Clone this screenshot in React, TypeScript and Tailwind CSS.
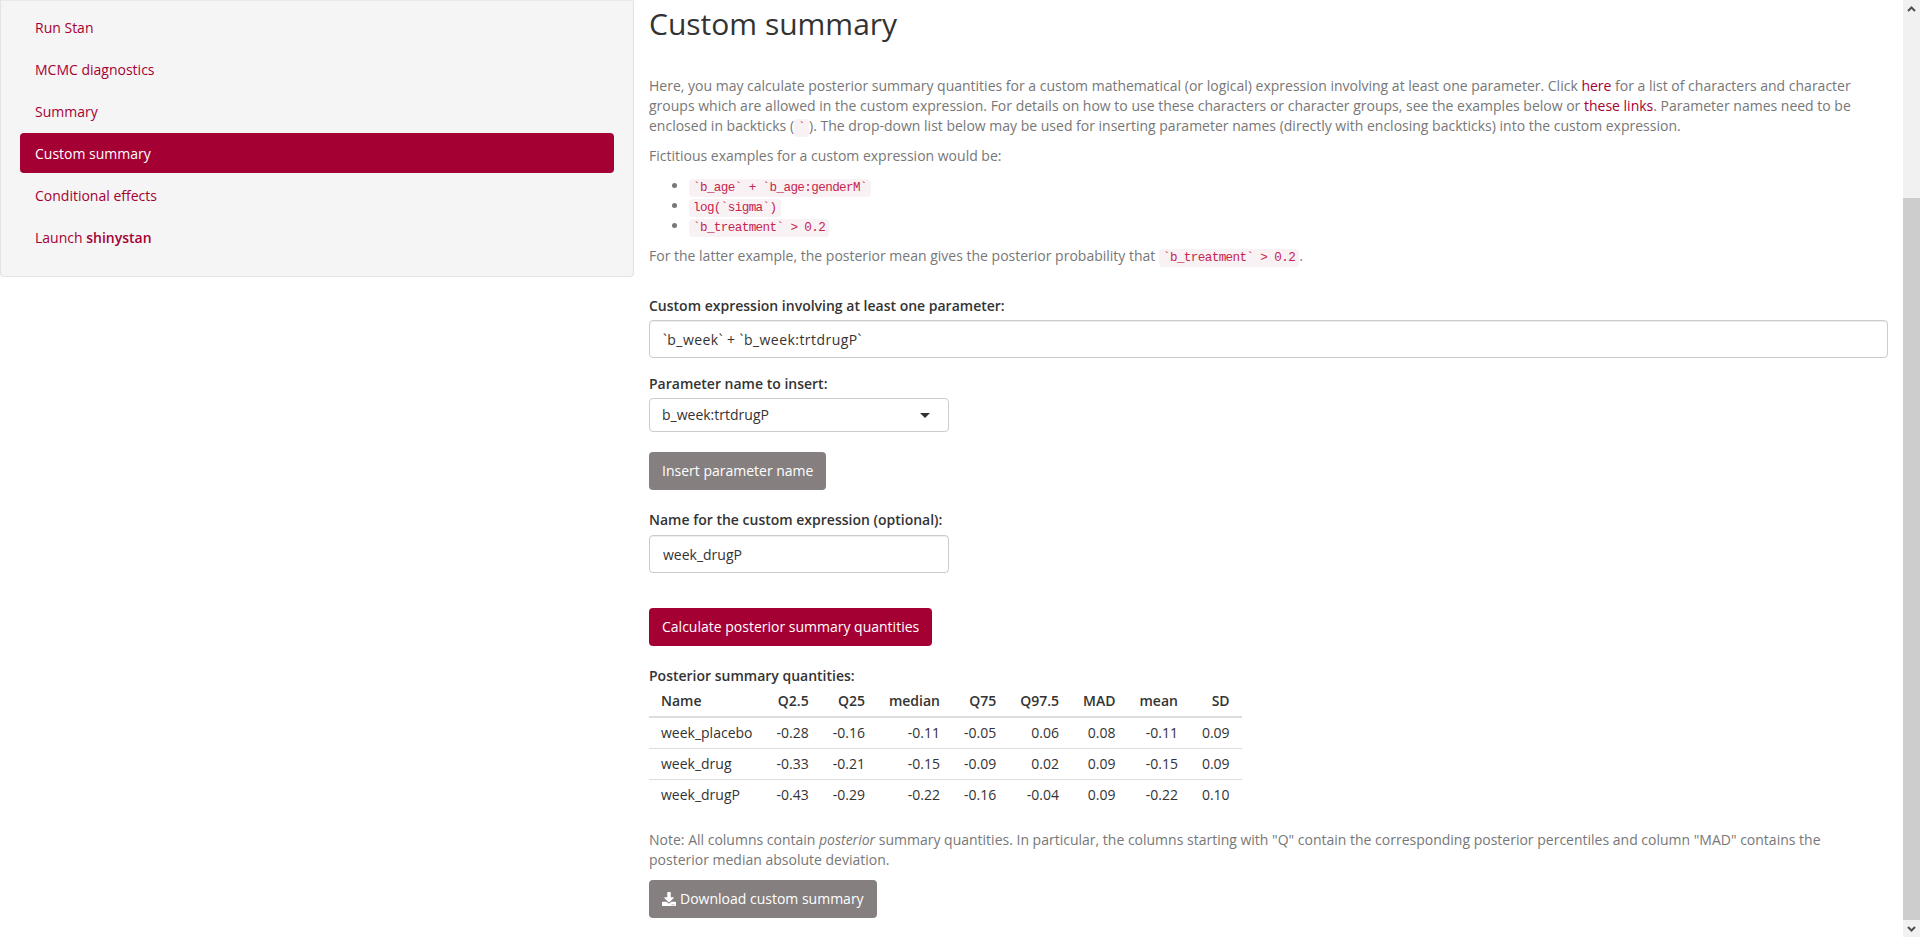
import { FaDownload } from 'react-icons/fa';

const navItems = ['Run Stan', 'MCMC diagnostics', 'Summary', 'Custom summary', 'Conditional effects'];

const columns = ['Q2.5', 'Q25', 'median', 'Q75', 'Q97.5', 'MAD', 'mean', 'SD'];

const rows = [
  ['week_placebo', '-0.28', '-0.16', '-0.11', '-0.05', '0.06', '0.08', '-0.11', '0.09'],
  ['week_drug', '-0.33', '-0.21', '-0.15', '-0.09', '0.02', '0.09', '-0.15', '0.09'],
  ['week_drugP', '-0.43', '-0.29', '-0.22', '-0.16', '-0.04', '0.09', '-0.22', '0.10'],
];

const Code = ({ children }: { children: string }) => (
  <code className="rounded-[4px] bg-[#f9f2f4] px-[4px] py-[2px] font-['Liberation_Mono',monospace] text-[12.6px] leading-none tracking-[-0.6px] text-[#c7254e]">
    {children}
  </code>
);

const NavLink = ({ label }: { label: string }) => (
  <li
    className={
      label === 'Custom summary'
        ? 'rounded-[4px] bg-[#a50034] px-[15px] pt-[11px] pb-[9px] text-white'
        : 'rounded-[4px] px-[15px] pt-[11px] pb-[9px] text-[#a50034]'
    }
  >
    {label}
  </li>
);

const ScrollBar = () => (
  <div className="flex h-full w-[17px] shrink-0 flex-col bg-[#f1f1f1]">
    <div className="flex h-[17px] items-center justify-center">
      <svg width="9" height="6" viewBox="0 0 9 6">
        <path d="M1 5l3.5-3.5L8 5" fill="none" stroke="#505050" strokeWidth="2" />
      </svg>
    </div>
    <div className="mt-[181px] h-[722px] bg-[#cdcdcd]" />
    <div className="flex flex-1 items-center justify-center">
      <svg width="9" height="6" viewBox="0 0 9 6">
        <path d="M1 1l3.5 3.5L8 1" fill="none" stroke="#505050" strokeWidth="2" />
      </svg>
    </div>
  </div>
);

export default function App() {
  return (
    <div className="flex h-[937px] w-full overflow-hidden bg-white font-['Open_Sans',sans-serif] text-[14px] leading-[20px] text-[#777]">
      <div className="flex min-w-0 flex-1">
        <aside className="w-[634px] shrink-0">
          <div className="rounded-b-[4px] border border-t-0 border-[#e3e3e3] bg-[#f5f5f5] px-[19px] pt-[7px] pb-[19px] shadow-[inset_0_1px_1px_rgba(0,0,0,0.05)]">
            <ul className="flex flex-col gap-[2px]">
              {navItems.map((item) => (
                <NavLink key={item} label={item} />
              ))}
              <li className="px-[15px] pt-[11px] pb-[9px] text-[#a50034]">
                Launch <strong className="font-semibold">shinystan</strong>
              </li>
            </ul>
          </div>
        </aside>

        <main className="min-w-0 flex-1 pr-[15px] pl-[15px]">
          <h2 className="mt-[7px] text-[30px] leading-[33px] font-normal text-[#333]">Custom summary</h2>

          <p className="mt-[36px]">
            Here, you may calculate posterior summary quantities for a custom mathematical (or logical) expression
            involving at least one parameter. Click <a className="text-[#a50034]">here</a> for a list of characters and
            character groups which are allowed in the custom expression. For details on how to use these characters or
            character groups, see the examples below or <a className="text-[#a50034]">these links</a>. Parameter names
            need to be enclosed in backticks (<Code>`</Code>). The drop-down list below may be used for inserting
            parameter names (directly with enclosing backticks) into the custom expression.
          </p>
          <p className="mt-[10px]">Fictitious examples for a custom expression would be:</p>
          <ul className="mt-[10px] list-disc pl-[40px]">
            <li>
              <Code>`b_age` + `b_age:genderM`</Code>
            </li>
            <li>
              <Code>log(`sigma`)</Code>
            </li>
            <li>
              <Code>`b_treatment` &gt; 0.2</Code>
            </li>
          </ul>
          <p className="mt-[10px]">
            For the latter example, the posterior mean gives the posterior probability that{' '}
            <Code>`b_treatment` &gt; 0.2</Code>.
          </p>

          <label className="mt-[30px] block font-semibold text-[#333]">
            Custom expression involving at least one parameter:
          </label>
          <input
            readOnly
            value="`b_week` + `b_week:trtdrugP`"
            className="mt-[4px] block h-[38px] w-full rounded-[4px] border border-[#ccc] bg-white px-[13px] tracking-[0.45px] text-[#333] shadow-[inset_0_1px_1px_rgba(0,0,0,0.075)] outline-none"
          />

          <label className="mt-[16px] block font-semibold text-[#333]">Parameter name to insert:</label>
          <div className="mt-[4px] flex h-[34px] w-[300px] items-center justify-between rounded-[4px] border border-[#ccc] bg-white pr-[18px] pl-[12px] text-[#333]">
            <span>b_week:trtdrugP</span>
            <span className="h-0 w-0 border-x-[5px] border-t-[5px] border-x-transparent border-t-[#333]" />
          </div>

          <button className="mt-[20px] block h-[38px] rounded-[4px] bg-[#857f80] px-[13px] text-white">
            Insert parameter name
          </button>

          <label className="mt-[20px] block font-semibold text-[#333]">Name for the custom expression (optional):</label>
          <input
            readOnly
            value="week_drugP"
            className="mt-[5px] block h-[38px] w-[300px] rounded-[4px] border border-[#ccc] bg-white px-[13px] text-[#333] shadow-[inset_0_1px_1px_rgba(0,0,0,0.075)] outline-none"
          />

          <button className="mt-[35px] block h-[38px] rounded-[4px] bg-[#a50034] px-[13px] text-white">
            Calculate posterior summary quantities
          </button>

          <div className="mt-[20px] font-semibold text-[#333]">Posterior summary quantities:</div>
          <table className="border-collapse text-[#333]">
            <thead>
              <tr className="border-b-2 border-[#ddd]">
                <th className="h-[31px] px-[12px] text-left font-semibold">Name</th>
                {columns.map((col) => (
                  <th key={col} className="px-[12px] text-right font-semibold">
                    {col}
                  </th>
                ))}
              </tr>
            </thead>
            <tbody>
              {rows.map((row, i) => (
                <tr key={row[0]} className={i < 2 ? 'border-b border-[#ddd]' : ''}>
                  {row.map((cell, j) => (
                    <td key={j} className={j === 0 ? 'h-[31px] px-[12px] text-left' : 'h-[31px] px-[12px] text-right'}>
                      {cell}
                    </td>
                  ))}
                </tr>
              ))}
            </tbody>
          </table>

          <p className="mt-[20px]">
            Note: All columns contain <em>posterior</em> summary quantities. In particular, the columns starting with
            "Q" contain the corresponding posterior percentiles and column "MAD" contains the
            <br />
            posterior median absolute deviation.
          </p>

          <button className="mt-[10px] flex h-[38px] items-center gap-[4px] rounded-[4px] bg-[#857f80] px-[13px] text-white">
            <FaDownload className="h-[14px] w-[14px]" />
            Download custom summary
          </button>
        </main>
      </div>
      <ScrollBar />
    </div>
  );
}
